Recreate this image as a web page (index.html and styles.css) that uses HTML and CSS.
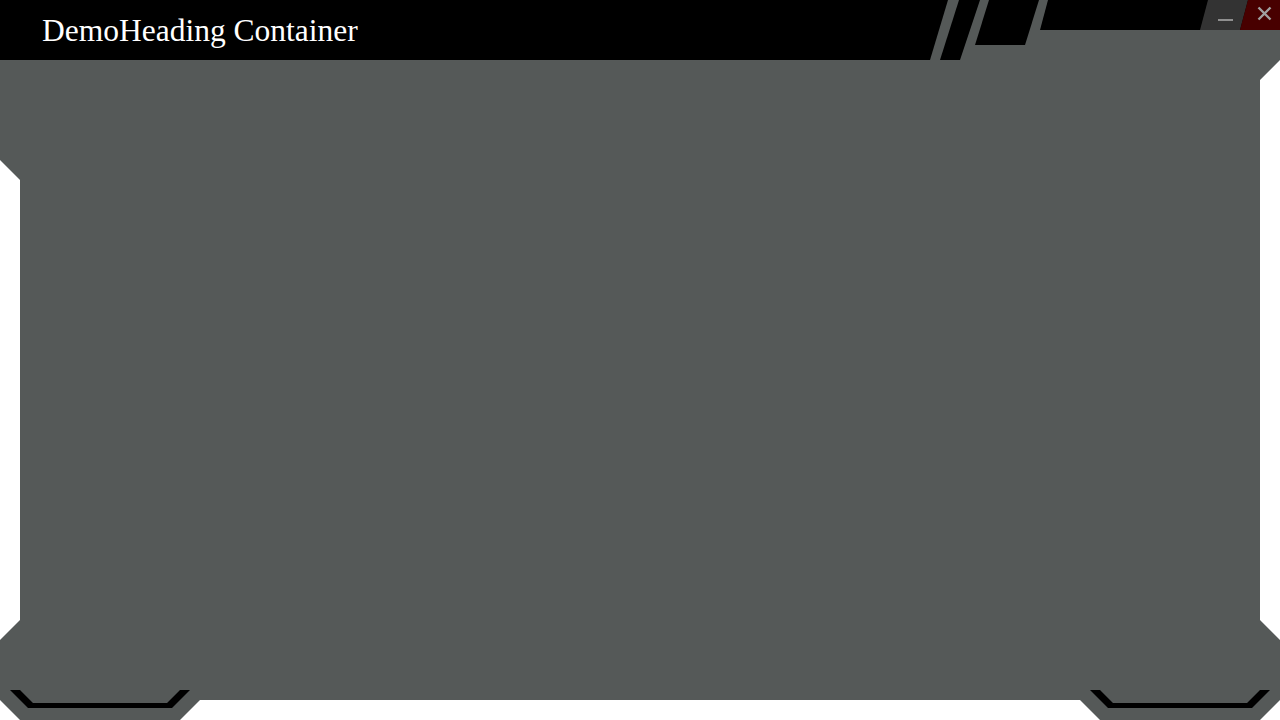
FILE: index.html
```html
<!DOCTYPE html>
<html lang="en">
<head>
<meta charset="utf-8">
<title>DemoHeading Container</title>
<link rel="stylesheet" href="styles.css">
</head>
<body>
<div class="frame">
  <div class="panel">
    <header class="header">
      <h1 class="title">DemoHeading Container</h1>
      <svg class="stripes" width="118" height="60" viewBox="0 0 118 60" aria-hidden="true">
        <polygon points="29,0 50,0 30,60 10,60" fill="#000"/>
        <polygon points="59,0 109,0 95,45 45,45" fill="#000"/>
      </svg>
      <div class="topbar">
        <button class="btn btn-min" aria-label="Minimize">
          <span class="min-line"></span>
        </button>
        <button class="btn btn-close" aria-label="Close">
          <svg width="15" height="15" viewBox="0 0 15 15" aria-hidden="true">
            <path d="M1.5 1.5 L13.5 13.5 M13.5 1.5 L1.5 13.5" stroke="#a0a0a0" stroke-width="2.4" fill="none"/>
          </svg>
        </button>
      </div>
    </header>
    <main class="content"></main>
  </div>
  <footer class="footer">
    <div class="tab">
      <svg width="200" height="30" viewBox="0 0 200 30" aria-hidden="true">
        <polygon points="10,0 28,18 172,18 190,0 180,0 167,13 33,13 20,0" fill="#000"/>
      </svg>
    </div>
    <div class="tab">
      <svg width="200" height="30" viewBox="0 0 200 30" aria-hidden="true">
        <polygon points="10,0 28,18 172,18 190,0 180,0 167,13 33,13 20,0" fill="#000"/>
      </svg>
    </div>
  </footer>
</div>
</body>
</html>
```

FILE: styles.css
```css
html, body {
  margin: 0;
  padding: 0;
  background: #ffffff;
}

.frame {
  width: 1280px;
  height: 720px;
  display: flex;
  flex-direction: column;
  overflow: hidden;
}

.panel {
  height: 700px;
  background: #555958;
  display: flex;
  flex-direction: column;
  clip-path: polygon(0 0, 100% 0, 100% 60px, 1260px 80px, 1260px 620px, 100% 640px, 100% 100%, 0 100%, 0 640px, 20px 620px, 20px 180px, 0 160px);
}

.header {
  display: flex;
  align-items: flex-start;
  height: 60px;
}

.title {
  flex: 0 0 948px;
  margin: 0 -18px 0 0;
  height: 60px;
  box-sizing: border-box;
  padding-left: 42px;
  padding-top: 2px;
  background: #000;
  color: #ffffff;
  font-family: "Liberation Serif", "Times New Roman", serif;
  font-weight: normal;
  font-size: 31.5px;
  line-height: 58px;
  white-space: nowrap;
  clip-path: polygon(0 0, 100% 0, calc(100% - 18px) 100%, 0 100%);
}

.stripes {
  flex: 0 0 118px;
  display: block;
  position: relative;
}

.topbar {
  flex: 1;
  margin-left: -8px;
  height: 30px;
  background: #000;
  display: flex;
  justify-content: flex-end;
  clip-path: polygon(8px 0, 100% 0, 100% 100%, 0 100%);
}

.btn {
  border: 0;
  padding: 0;
  margin: 0;
  height: 30px;
  display: flex;
  cursor: pointer;
}

.btn-min {
  width: 48px;
  background: #333333;
  clip-path: polygon(8px 0, 100% 0, calc(100% - 8px) 100%, 0 100%);
  align-items: flex-start;
  justify-content: center;
}

.min-line {
  display: block;
  width: 15px;
  height: 2px;
  margin-top: 19px;
  margin-left: 2px;
  background: #8f8f8f;
}

.btn-close {
  width: 40px;
  margin-left: -8px;
  background: #480000;
  clip-path: polygon(8px 0, 100% 0, 100% 100%, 0 100%);
  align-items: flex-start;
  box-sizing: border-box;
  padding-top: 6px;
  padding-left: 17px;
}

.btn-close svg {
  display: block;
}

.content {
  flex: 1;
}

.footer {
  display: flex;
  justify-content: space-between;
  margin-top: -10px;
  height: 30px;
}

.tab {
  width: 200px;
  height: 30px;
  background: #555958;
  clip-path: polygon(0 0, 100% 0, 100% 10px, calc(100% - 20px) 100%, 20px 100%, 0 10px);
}

.tab svg {
  display: block;
}
```
